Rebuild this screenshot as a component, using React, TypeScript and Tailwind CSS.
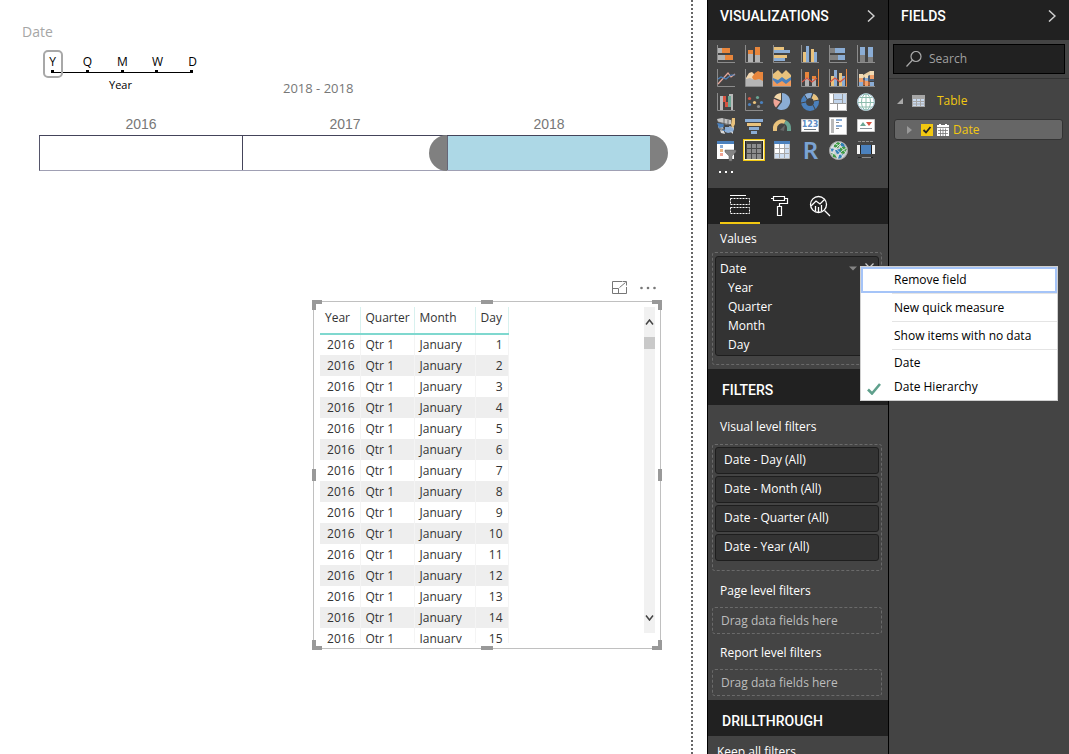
import React from "react";

type IconProps = { children: React.ReactNode };

function Glyph({ children }: IconProps) {
  return (
    <svg viewBox="0 0 18 18" className="block size-[18px] overflow-visible" aria-hidden="true">
      {children}
    </svg>
  );
}

const Axis = () => <path d="M.5 0V17.5H18" fill="none" stroke="#8c8c8c" />;

const visuals: { name: string; icon: React.ReactNode }[] = [
  {
    name: "Stacked bar chart",
    icon: (
      <>
        <Axis />
        <path d="M1 3h4v5H1zM1 10h7v5H1z" fill="#b3b3b3" />
        <path d="M5 3h8v5H5zM8 10h8v5H8z" fill="#e8863c" />
      </>
    ),
  },
  {
    name: "Stacked column chart",
    icon: (
      <>
        <Axis />
        <path d="M3 9h5v8H3zM10 9h5v8h-5z" fill="#b3b3b3" />
        <path d="M3 5h5v4H3zM10 2h5v8h-5z" fill="#e8863c" />
      </>
    ),
  },
  {
    name: "Clustered bar chart",
    icon: (
      <>
        <Axis />
        <path d="M1 2h10v3H1zM1 10h13v3H1z" fill="#e9c27c" />
        <path d="M1 5h16v3H1zM1 13h11v3H1z" fill="#8badd5" />
      </>
    ),
  },
  {
    name: "Clustered column chart",
    icon: (
      <>
        <Axis />
        <path d="M2 7h3v10H2zM10 4h3v13h-3z" fill="#e9c27c" />
        <path d="M5 1h3v16H5zM13 7h3v10h-3z" fill="#8badd5" />
      </>
    ),
  },
  {
    name: "100% stacked bar chart",
    icon: (
      <>
        <Axis />
        <path d="M1 3h5v5H1zM1 10h8v5H1z" fill="#808080" />
        <path d="M6 3h10v5H6zM9 10h7v5H9z" fill="#8badd5" />
      </>
    ),
  },
  {
    name: "100% stacked column chart",
    icon: (
      <>
        <Axis />
        <path d="M3 9h5v8H3zM11 12h5v5h-5z" fill="#808080" />
        <path d="M3 2h5v8H3zM11 2h5v10h-5z" fill="#8badd5" />
      </>
    ),
  },
  {
    name: "Line chart",
    icon: (
      <>
        <Axis />
        <path d="M1 15L11 4l3 4 4-3" fill="none" stroke="#e8a99c" strokeWidth="1.2" />
        <path d="M1 10l3-2 5 2 5-4h4" fill="none" stroke="#4b81bd" strokeWidth="1.2" />
      </>
    ),
  },
  {
    name: "Area chart",
    icon: (
      <>
        <path d="M1 9l3-5 3-1 4 4v8H1z" fill="#f3d7b0" />
        <path d="M7 8l3-4 3-2 2 1h3v9H9z" fill="#e8863c" />
        <path d="M1 10l4-1 5 2 4-1 4 2v5H1z" fill="#b5b5b5" />
        <Axis />
      </>
    ),
  },
  {
    name: "Stacked area chart",
    icon: (
      <>
        <path d="M0 5l5-4 4 4 4-4 5 5v6H0z" fill="#e9c27c" />
        <path d="M0 9l5 2 4-3 4 3 5-3v9H0z" fill="#4b81bd" />
        <path d="M0 11l4 4 5-3 4 3 5-4v6H0z" fill="#f09a5c" />
        <path d="M-.5 0V17.500H18" fill="none" stroke="#8c8c8c" />
      </>
    ),
  },
  {
    name: "Line and stacked column chart",
    icon: (
      <>
        <path d="M4 3h4v6H4zM11 7h4v3h-4z" fill="#e8863c" />
        <path d="M4 9h4v8H4zM11 10h4v7h-4z" fill="#b3b3b3" />
        <Axis />
        <path d="M17.5 0v17.5" stroke="#e8863c" />
        <path d="M1 13l5-4 5 4 5-4" fill="none" stroke="#d75442" strokeWidth="1.2" />
      </>
    ),
  },
  {
    name: "Line and clustered column chart",
    icon: (
      <>
        <path d="M2 7h3v10H2zM10 4h3v13h-3z" fill="#e9c27c" />
        <path d="M5 1h3v16H5zM13 7h3v10h-3z" fill="#8badd5" />
        <Axis />
        <path d="M17.5 0v17.5" stroke="#e8863c" />
        <path d="M1 13l5-4 5 4 5-4" fill="none" stroke="#d75442" strokeWidth="1.2" />
      </>
    ),
  },
  {
    name: "Ribbon chart",
    icon: (
      <>
        <path d="M2 6h4l7-4h4v5l-9 3H2z" fill="#e9cfa4" />
        <path d="M2 9h4l7-3h4v6H2z" fill="#4a5e78" />
        <path d="M2 12l5-1 6 2h4v4h-3l-5-1-7 1z" fill="#b56a42" />
        <path d="M2 5h4v4H2zM8 6h3v3H8zM13 2h4v4h-4z" fill="#f2dcb6" />
        <path d="M2 9h4v4H2zM8 12h3v5H8zM13 6h4v4h-4z" fill="#f0a06a" />
        <path d="M2 13h4v4H2zM8 9h3v3H8zM13 13h4v4h-4z" fill="#8badd5" />
        <Axis />
      </>
    ),
  },
  {
    name: "Waterfall chart",
    icon: (
      <>
        <path d="M3 3h3v14H3zM14 1h2v16h-2z" fill="#b9b9b9" />
        <path d="M6 3h3v6H6zM8 9h3v5H8z" fill="#d75442" />
        <path d="M11 3h3v11h-3z" fill="#6aa593" />
        <path d="M12 1h4v2h-4z" fill="#b9b9b9" />
        <Axis />
      </>
    ),
  },
  {
    name: "Scatter chart",
    icon: (
      <>
        <Axis />
        <circle cx="4.500" cy="5.500" r="1.6" fill="#d75442" />
        <circle cx="12.500" cy="4.500" r="1.6" fill="#6aa593" />
        <circle cx="4.500" cy="11.500" r="1.6" fill="#4b81bd" />
        <circle cx="9.500" cy="9.500" r="1.6" fill="#e9c27c" />
        <circle cx="16.500" cy="9.500" r="1.6" fill="#4b81bd" />
        <circle cx="13.500" cy="13.500" r="1.6" fill="#8c8c8c" />
      </>
    ),
  },
  {
    name: "Pie chart",
    icon: (
      <>
        <path d="M9 0A8.500 8.500 0 1 1 4 15.600L9 9z" fill="#8badd5" />
        <path d="M8 7.500V0A8.500 8.500 0 0 0 1 4.500z" fill="#f3d7a9" />
        <path d="M7.500 8.700L.8 5.700A9 9 0 0 0 3 14.500z" fill="#f0a597" />
      </>
    ),
  },
  {
    name: "Donut chart",
    icon: (
      <>
        <circle cx="9" cy="9" r="6.500" fill="none" stroke="#4b81bd" strokeWidth="5" />
        <path d="M4.800 4A6.500 6.500 0 0 1 10.500 2.700" fill="none" stroke="#8badd5" strokeWidth="5" />
        <path d="M11.500 3A6.500 6.500 0 0 1 15.300 7.500" fill="none" stroke="#e9c27c" strokeWidth="5" />
        <path d="M3 1l3 5M12 0l-2 5M18 7l-5 1M14.500 17L12 12M0 10l5-1" stroke="#444" />
      </>
    ),
  },
  {
    name: "Treemap",
    icon: (
      <>
        <path d="M0 0h18v18H0z" fill="#fff" />
        <path d="M5 1h8v5H5zM14 1h3v9h-3zM5 7h8v3H5z" fill="#c2d5ec" />
        <path d="M4.500 0v10.500M0 10.500h18M8.500 10.500V18M13.500 0v10.500M4.500 6.500h9" stroke="#9a9a9a" fill="none" />
        <path d="M.5.5h17v17H.5z" fill="none" stroke="#c0c0c0" />
      </>
    ),
  },
  {
    name: "Map",
    icon: (
      <>
        <circle cx="9" cy="9" r="8.700" fill="#fff" />
        <circle cx="9" cy="9" r="8.200" fill="none" stroke="#9dc3d4" />
        <g fill="none" stroke="#8dbcae">
          <ellipse cx="9" cy="9" rx="4.500" ry="8" />
          <path d="M9 1v16M1 9.500h16M3 4.500h12M3 14h12" />
        </g>
      </>
    ),
  },
  {
    name: "Filled map",
    icon: (
      <>
        <path d="M0 2l5-1 4 1 5 1v4l-3 1-4-1-6-2zM1 9l5 1 1 4-5-2zM12 9l5 1v3l-4-1z" fill="#c4c4c4" />
        <path d="M15 1h3v6l-2 4-2-3z" fill="#e9c27c" />
        <path d="M0 6l7 1v3l-5 1zM5 12h4v2H6z" fill="#4b81bd" />
        <path d="M8 10h6l3 2-1 3-5 1-3-1z" fill="#8badd5" />
        <path d="M3 13l4 1 1 3-4-1zM13 14l3 1v2z" fill="#d8d8d8" />
        <path d="M1 5l12 3M7 1v9M11 3v6M1 11.500l7 1" stroke="#555" strokeWidth=".8" />
      </>
    ),
  },
  {
    name: "Funnel",
    icon: (
      <>
        <path d="M0 2h18v3H0zM4 10h10v3H4z" fill="#8badd5" />
        <path d="M2 6h14v3H2z" fill="#e9c27c" />
        <path d="M6 14h6v3H6z" fill="#8badd5" />
      </>
    ),
  },
  {
    name: "Gauge",
    icon: (
      <>
        <path d="M2 14V12A7 7 0 0 1 12 5" fill="none" stroke="#e9c27c" strokeWidth="4" />
        <path d="M12 5A7 7 0 0 1 16 12V14" fill="none" stroke="#6aa593" strokeWidth="4" />
        <path d="M7 13l5-5-1 6z" fill="#666" />
      </>
    ),
  },
  {
    name: "Card",
    icon: (
      <>
        <path d="M.5 2.500h17v12H.5z" fill="#fff" stroke="#c8c8c8" />
        <text x="9" y="10" textAnchor="middle" fontFamily="DejaVu Sans" fontSize="8" fontWeight="bold" fill="#5e8ec6">
          123
        </text>
        <path d="M3 12.500h12" stroke="#6a7884" />
      </>
    ),
  },
  {
    name: "Multi-row card",
    icon: (
      <>
        <path d="M.5.5h17v17H.5z" fill="#fff" stroke="#c8c8c8" />
        <path d="M2 2h3v14H2z" fill="#b9b9b9" />
        <path d="M7 2h6v2H7zM7 8h6v2H7z" fill="#8badd5" />
        <path d="M7 5h3v1H7zM7 11h3v1H7z" fill="#8c8c8c" />
      </>
    ),
  },
  {
    name: "KPI",
    icon: (
      <>
        <path d="M.5 2.500h17v12H.5z" fill="#fff" stroke="#c8c8c8" />
        <path d="M3 9l3-4 3 4z" fill="#6aa593" />
        <path d="M9 5h6l-3 4z" fill="#d75442" />
        <path d="M3 11.500h12" stroke="#8a949c" />
      </>
    ),
  },
  {
    name: "Slicer",
    icon: (
      <>
        <path d="M0 0h17v18H0z" fill="#fff" />
        <path d="M0 0h17v3H0z" fill="#4b81bd" />
        <path d="M3 4h3v3H3z" fill="#8badd5" />
        <path d="M3 8h3v3H3z" fill="#e9b27c" />
        <path d="M3 12h3v3H3z" fill="#f0a597" />
        <path d="M8 9h11v2l-4 4v5h-3v-5l-4-4z" fill="#858585" stroke="#5a5a5a" strokeWidth=".5" />
      </>
    ),
  },
  {
    name: "Table",
    icon: (
      <>
        <path d="M2 3h14v15H2z" fill="#8c8c8c" />
        <path d="M2 0h14v3H2z" fill="#444" />
        <path d="M2 7.500h14M2 12.500h14M6.500 3v15M11.500 3v15M1.500 0v18M16.500 0v18" stroke="#4a4a4a" />
      </>
    ),
  },
  {
    name: "Matrix",
    icon: (
      <>
        <path d="M1 0h16v17H1z" fill="#fff" />
        <path d="M12 3h5v14h-5zM1 13h11v4H1z" fill="#cfdff2" />
        <path d="M1 7.500h16M1 12.500h16M6.500 3v14M11.500 3v14" stroke="#a8a8a8" />
        <path d="M1.500.5h15v17h-15z" fill="none" stroke="#b8b8b8" />
        <path d="M1 0h16v3H1z" fill="#4b81bd" />
      </>
    ),
  },
  {
    name: "R script visual",
    icon: (
      <text x="9.500" y="18" textAnchor="middle" fontFamily="Noto Sans" fontSize="24" fontWeight="600" fill="#7ba3d3">
        R
      </text>
    ),
  },
  {
    name: "ArcGIS map",
    icon: (
      <>
        <circle cx="9.500" cy="9.500" r="9.200" fill="#c9cfd2" />
        <path d="M5 3l4-2 3 2-3 4-4-1zM11 7l4-2 3 3-3 5-4-1zM2 12l4 1 2 4-4-1z" fill="#3f9b45" />
        <path d="M12 1l3 2 1 3-4-1zM6 9l5-1 1 4-4 1zM10 14l4-1-2 4-3 1zM1 7l4 1-2 3z" fill="#2f80b8" />
        <g fill="none" stroke="#dfe4e6" strokeWidth=".9">
          <path d="M1 6q8 1 13 10M5 2q8 3 12 10M1 11q6 1 8 7M3 15Q5 7 13 1M1 9Q4 4 8 1M8 18q2-8 10-11" />
        </g>
        <circle cx="9.500" cy="9.500" r="9" fill="none" stroke="#a8a8a8" />
      </>
    ),
  },
  {
    name: "Timeline",
    icon: (
      <>
        <path d="M1 .5h16" stroke="#8a8a8a" strokeDasharray="3 1" />
        <path d="M1 16.500h16" stroke="#262626" strokeDasharray="3 1" />
        <path d="M0 4h18v9H0z" fill="#222" />
        <path d="M0 4h3v9H0zM15 4h3v9h-3z" fill="#f2f2f2" />
        <path d="M4 4h10v9H4z" fill="#4b81bd" />
        <path d="M5 16.500h9" stroke="#8c8c8c" />
      </>
    ),
  },
];

function Chevron() {
  return (
    <svg viewBox="0 0 8 12" className="h-3 w-2" fill="none" stroke="#d0d0d0" strokeWidth="1.500" aria-hidden="true">
      <path d="M1 .5L7 6l-6 5.500" />
    </svg>
  );
}

function PaneHeader({ title }: { title: string }) {
  return (
    <header className="flex h-10 shrink-0 items-center justify-between bg-[#212121] pr-[13px] pb-2 pl-3 font-[Roboto] text-sm font-medium text-white">
      <h2>{title}</h2>
      <button type="button" aria-label={`Collapse ${title}`}>
        <Chevron />
      </button>
    </header>
  );
}

function SectionHeader({ title }: { title: string }) {
  return (
    <h2 className="flex h-9 shrink-0 items-center bg-[#212121] px-3.5 pt-1.5 font-[Roboto] text-sm font-medium text-white">
      {title}
    </h2>
  );
}

const dashed = "ml-1 mr-1.5 rounded-[3px] border border-dashed border-[#6a6a6a]";
const label = "px-3 text-xs leading-4 text-white";

const granularities = ["Y", "Q", "M", "W", "D"];

function TimelineSlicer() {
  return (
    <section aria-label="Date timeline" className="w-[669px]">
      <h3 className="pl-[22px] text-sm leading-5 text-[#a6a6a6]">Date</h3>
      <div className="relative ml-[35px] w-[175px] pt-3">
        <div className="flex text-xs leading-4 text-black">
          {granularities.map((g) => (
            <button key={g} type="button" className="w-[35px] text-center">
              {g}
            </button>
          ))}
        </div>
        <div className="ml-4 flex w-[142px] justify-between border-b border-black">
          {granularities.map((g) => (
            <span key={g} className="h-[2px] w-[3px] bg-black" />
          ))}
        </div>
        <div className="absolute top-2 left-2 h-7 w-5 rounded-[5px] border-2 border-[#a8a8a8]" />
        <p className="pt-1 pr-1 text-center text-[11px] leading-4 text-black">Year</p>
      </div>
      <p className="-mt-[15px] pl-[283px] text-[13px] leading-5 text-[#777]">2018 - 2018</p>
      <div className="mt-4 mr-[18px] ml-[39px] grid grid-cols-3 text-center font-['Liberation_Sans'] text-sm leading-5 text-[#777]">
        <span>2016</span>
        <span>2017</span>
        <span>2018</span>
      </div>
      <div className="relative mt-px mr-[18px] ml-[39px] grid h-9 grid-cols-3 border border-t-[#44445a] border-r-[#666677] border-b-[#a0a0b4] border-l-[#55556a]">
        <div className="border-r border-[#44445a]" />
        <div />
        <div className="border-l border-[#666677] bg-[#add8e6]" />
        <button
          type="button"
          aria-label="Range start"
          className="absolute -top-px right-[203px] h-9 w-[18px] rounded-l-full bg-[#808080]"
        />
        <button
          type="button"
          aria-label="Range end"
          className="absolute -top-px -right-[18px] h-9 w-[18px] rounded-r-full bg-[#808080]"
        />
      </div>
    </section>
  );
}

const days = Array.from({ length: 15 }, (_, i) => i + 1);

function TableVisual() {
  return (
    <section aria-label="Date table" className="ml-[313px] w-[348px]">
      <div className="flex h-[21px] items-start justify-end gap-3 pt-px pr-[5px]">
        <button type="button" aria-label="Focus mode">
          <svg viewBox="0 0 16 13" className="h-[13px] w-4" fill="none" stroke="#777">
            <path d="M10 .5H.5v12h14V6M.5 7.500h6v5M7.500 6.500l6-5M10.500.5h4v4" />
          </svg>
        </button>
        <button type="button" aria-label="More options">
          <svg viewBox="0 0 16 13" className="h-[13px] w-4" fill="#777">
            <circle cx="1.500" cy="7" r="1.300" />
            <circle cx="8" cy="7" r="1.300" />
            <circle cx="14.500" cy="7" r="1.300" />
          </svg>
        </button>
      </div>
      <div className="relative flex h-[348px] items-start justify-between border border-[#c0c0c0] py-[5px] pr-[5px] pl-1.5">
        <div className="h-[336px] overflow-hidden">
          <table className="w-[188px] table-fixed border-collapse text-xs text-[#333]">
            <thead>
              <tr className="h-[27px] border-b-2 border-[#7fd8cf] text-left align-top [&>th]:border-r [&>th]:border-r-[#d8f1ef] [&>th]:pt-0.5 [&>th]:pl-[5px] [&>th]:font-normal [&>th]:leading-[18px]">
                <th className="w-10">Year</th>
                <th className="w-[54px]">Quarter</th>
                <th className="w-[61px]">Month</th>
                <th className="w-[33px]">Day</th>
              </tr>
            </thead>
            <tbody>
              {days.map((d) => (
                <tr
                  key={d}
                  className="h-[21px] even:bg-[#eeeeee] [&>td]:border-r [&>td]:border-[#f4f4f4] [&>td]:px-[5px] [&>td]:leading-5"
                >
                  <td className="text-right">2016</td>
                  <td>Qtr 1</td>
                  <td>January</td>
                  <td className="text-right">{d}</td>
                </tr>
              ))}
            </tbody>
          </table>
        </div>
        <div className="flex h-[326px] w-[11px] flex-col items-center bg-[#f1f1f1] pt-3">
          <svg viewBox="0 0 9 6" className="h-1.5 w-[9px]" fill="none" stroke="#444" strokeWidth="1.500">
            <path d="M1 5.500L4.500 1 8 5.500" />
          </svg>
          <div className="mt-3 h-3 w-full bg-[#c9c9c9]" />
          <svg viewBox="0 0 9 6" className="mt-auto mb-3 h-1.5 w-[9px]" fill="none" stroke="#444" strokeWidth="1.500">
            <path d="M1 .5L4.500 5 8 .5" />
          </svg>
        </div>
        <span className="absolute -top-0.5 -left-0.5 size-2.5 border-t-4 border-l-4 border-[#999]" />
        <span className="absolute -top-0.5 -right-0.5 size-2.5 border-t-4 border-r-4 border-[#999]" />
        <span className="absolute -bottom-0.5 -left-0.5 size-2.5 border-b-4 border-l-4 border-[#999]" />
        <span className="absolute -right-0.5 -bottom-0.5 size-2.5 border-r-4 border-b-4 border-[#999]" />
        <span className="absolute -top-0.5 left-1/2 h-1 w-3 -translate-x-1/2 bg-[#999]" />
        <span className="absolute -bottom-0.5 left-1/2 h-1 w-3 -translate-x-1/2 bg-[#999]" />
        <span className="absolute top-1/2 -left-0.5 h-3 w-1 -translate-y-1/2 bg-[#999]" />
        <span className="absolute top-1/2 -right-0.5 h-3 w-1 -translate-y-1/2 bg-[#999]" />
      </div>
    </section>
  );
}

function FieldMenu() {
  const item = "block w-full text-left text-xs text-black";
  const rule = "ml-[31px] border-t border-[#e4e4e4]";
  return (
    <div
      role="menu"
      className="absolute top-[9px] left-[144px] z-10 w-[198px] border border-[#d0d0d0] bg-white"
    >
      <button type="button" role="menuitem" className={`${item} h-[26px] border-2 border-[#a5c4f8] pl-[31px]`}>
        Remove field
      </button>
      <div className={rule} />
      <button type="button" role="menuitem" className={`${item} h-[27px] pl-[33px]`}>
        New quick measure
      </button>
      <div className={rule} />
      <button type="button" role="menuitem" className={`${item} h-[27px] pl-[33px]`}>
        Show items with no data
      </button>
      <div className={rule} />
      <button type="button" role="menuitem" className={`${item} h-[26px] pl-[33px]`}>
        Date
      </button>
      <button type="button" role="menuitem" className="flex h-6 w-full items-center gap-[13px] pb-0.5 pl-1.5 text-xs text-black">
        <svg viewBox="0 0 14 12" className="mt-1 h-3 w-3.5" fill="none" stroke="#5fa08c" strokeWidth="2.600" aria-hidden="true">
          <path d="M1 6.500L5 10.500 13 1" />
        </svg>
        Date Hierarchy
      </button>
    </div>
  );
}

function VisualizationsPane() {
  const filters = ["Day", "Month", "Quarter", "Year"];
  return (
    <aside className="flex w-[181px] shrink-0 flex-col border-l border-black bg-[#444]">
      <PaneHeader title="VISUALIZATIONS" />
      <div className="grid shrink-0 grid-cols-[repeat(6,18px)] gap-x-2.5 gap-y-1.5 pt-[5px] pl-[9px]">
        {visuals.map((v) => (
          <button
            key={v.name}
            type="button"
            aria-label={v.name}
            className={
              v.name === "Table"
                ? "bg-[#222] ring-1 ring-[#fdf3b8] outline-1 outline-offset-1 outline-[#f2c811]"
                : ""
            }
          >
            <Glyph>{v.icon}</Glyph>
          </button>
        ))}
      </div>
      <button type="button" aria-label="More visuals" className="mt-[11px] ml-2.5 self-start">
        <svg viewBox="0 0 16 4" className="block h-1 w-4" fill="#fff">
          <path d="M1 1h2v2H1zM7 1h2v2H7zM13 1h2v2h-2z" />
        </svg>
      </button>
      <nav className="mt-[14px] flex h-9 shrink-0 bg-[#212121] pl-3">
        <button type="button" aria-label="Fields" className="flex w-10 items-center justify-center border-b-2 border-[#f2c811]">
          <svg viewBox="0 0 20 20" className="size-5" fill="none" stroke="#fff">
            <path d="M0 .5h16" />
            <path d="M.5 3.500h19v6H.5zM.5 12.500h19v6H.5z" strokeDasharray="2 1" />
          </svg>
        </button>
        <button type="button" aria-label="Format" className="flex w-10 items-center justify-center">
          <svg viewBox="0 0 20 22" className="h-[22px] w-5" fill="none" stroke="#fff" strokeWidth="1.200">
            <path d="M3.500 1.500h11v4h-11zM3.500 3.500H1M14.500 3.500h3v5h-8v3M7.500 11.500h4v9h-4z" />
          </svg>
        </button>
        <button type="button" aria-label="Analytics" className="flex w-10 items-center justify-center">
          <svg viewBox="0 0 22 22" className="size-[22px]" fill="none" stroke="#fff" strokeWidth="1.300">
            <circle cx="9.500" cy="9.500" r="8" />
            <path d="M15.500 15.500l5.500 5.500M2 11l5-5 4 3 5-5M6.500 11v5M9.500 12v5M12.500 10v6" />
          </svg>
        </button>
      </nav>
      <h3 className={`${label} mt-[7px]`}>Values</h3>
      <div className={`${dashed} mt-[5px] px-0.5 pt-[3px] pb-2`}>
        <div className="relative rounded-[3px] border border-[#1e1e1e] bg-[#333] px-1 pt-0.5 text-xs leading-[19px] text-white">
          <div className="flex items-center">
            <span className="flex-1">Date</span>
            <button type="button" aria-label="Field options">
              <svg viewBox="0 0 8 5" className="h-[5px] w-2" fill="#858585">
                <path d="M0 .5h8L4 4.500z" />
              </svg>
            </button>
            <button type="button" aria-label="Remove Date" className="ml-2 pb-0.5">
              <svg viewBox="0 0 9 9" className="size-[9px]" fill="none" stroke="#ccc" strokeWidth="1.200">
                <path d="M.5.5l8 8M8.500.5l-8 8" />
              </svg>
            </button>
          </div>
          <ul className="pb-px pl-2">
            <li>Year</li>
            <li>Quarter</li>
            <li>Month</li>
            <li>Day</li>
          </ul>
          <FieldMenu />
        </div>
      </div>
      <div className="mt-1">
        <SectionHeader title="FILTERS" />
      </div>
      <h3 className={`${label} mt-3.5`}>Visual level filters</h3>
      <div className={`${dashed} mt-[9px] flex flex-col gap-0.5 px-0.5 pt-0.5 pb-[9px]`}>
        {filters.map((f) => (
          <button
            key={f}
            type="button"
            className="h-[27px] rounded-[3px] border border-[#1e1e1e] bg-[#333] px-2 pb-0.5 text-left text-xs text-white"
          >
            Date - {f} (All)
          </button>
        ))}
      </div>
      <h3 className={`${label} mt-3`}>Page level filters</h3>
      <div className={`${dashed} mt-2 px-2 py-1 text-xs leading-[17px] text-[#bdbdbd]`}>Drag data fields here</div>
      <h3 className={`${label} mt-[11px]`}>Report level filters</h3>
      <div className={`${dashed} mt-2 px-2 py-1 text-xs leading-[17px] text-[#bdbdbd]`}>Drag data fields here</div>
      <div className="mt-1">
        <SectionHeader title="DRILLTHROUGH" />
      </div>
      <h3 className="mt-2 px-[9px] text-xs leading-4 text-white">Keep all filters</h3>
    </aside>
  );
}

function FieldsPane() {
  return (
    <aside className="flex w-[181px] shrink-0 flex-col border-l border-black bg-[#444]">
      <PaneHeader title="FIELDS" />
      <div className="border-b border-[#333] p-1">
        <label className="flex h-[30px] items-center gap-[7px] border border-black bg-[#212121] px-3">
          <svg viewBox="0 0 16 16" className="size-4 shrink-0" fill="none" stroke="#aaa" strokeWidth="1.200" aria-hidden="true">
            <circle cx="10" cy="5.500" r="5" />
            <path d="M6.500 9L.5 15.500" />
          </svg>
          <input
            type="text"
            aria-label="Search"
            placeholder="Search"
            className="w-full min-w-0 bg-transparent text-xs text-white outline-none placeholder:text-[#a0a0a0]"
          />
        </label>
      </div>
      <div className="flex h-10 items-center pt-1 pl-2">
        <svg viewBox="0 0 6 6" className="size-1.5" fill="#a8a8a8" aria-hidden="true">
          <path d="M6 0v6H0z" />
        </svg>
        <svg viewBox="0 0 13 12" className="ml-[9px] h-3 w-[13px]" aria-hidden="true">
          <path d="M0 0h13v12H0z" fill="#a6a6a6" />
          <path d="M1 4h3v2H1zM5 4h3v2H5zM9 4h3v2H9zM1 7h3v1.500H1zM5 7h3v1.500H5zM9 7h3v1.500H9zM1 9.500h3V11H1zM5 9.500h3V11H5zM9 9.500h3V11H9z" fill="#c9daf0" />
        </svg>
        <span className="ml-3 text-xs text-[#f2c811]">Table</span>
      </div>
      <label className="mr-1.5 ml-[5px] flex h-[21px] items-center rounded-[3px] border border-[#333] bg-[#666] pl-3">
        <svg viewBox="0 0 5 8" className="h-2 w-[5px]" fill="#999" aria-hidden="true">
          <path d="M0 0l5 4-5 4z" />
        </svg>
        <span className="relative ml-[9px] size-3">
          <input type="checkbox" defaultChecked aria-label="Date" className="block size-3 appearance-none bg-[#f2c811]" />
          <svg viewBox="0 0 12 12" className="pointer-events-none absolute inset-0 size-3" fill="none" stroke="#222" strokeWidth="1.800">
            <path d="M2.500 6L5 8.500 9.500 3" />
          </svg>
        </span>
        <svg viewBox="0 0 12 12" className="ml-1 size-3" aria-hidden="true">
          <path d="M0 1h12v11H0zM2 0h2v2H2zM8 0h2v2H8z" fill="#fff" />
          <path d="M0 3.500h12M1 6.500h10M1 9.500h10M3.500 4.500V12M6 4.500V12M8.500 4.500V12" stroke="#777" strokeWidth=".8" />
        </svg>
        <span className="ml-1 text-xs text-[#f2c811]">Date</span>
      </label>
    </aside>
  );
}

export default function App() {
  return (
    <div className="flex h-screen overflow-hidden bg-white font-['Open_Sans','Noto_Sans',sans-serif]">
      <main className="mr-3.5 min-w-0 flex-1 overflow-hidden border-r-2 border-dotted border-[#666] pt-[22px]">
        <TimelineSlicer />
        <div className="mt-[109px]">
          <TableVisual />
        </div>
      </main>
      <VisualizationsPane />
      <FieldsPane />
    </div>
  );
}
